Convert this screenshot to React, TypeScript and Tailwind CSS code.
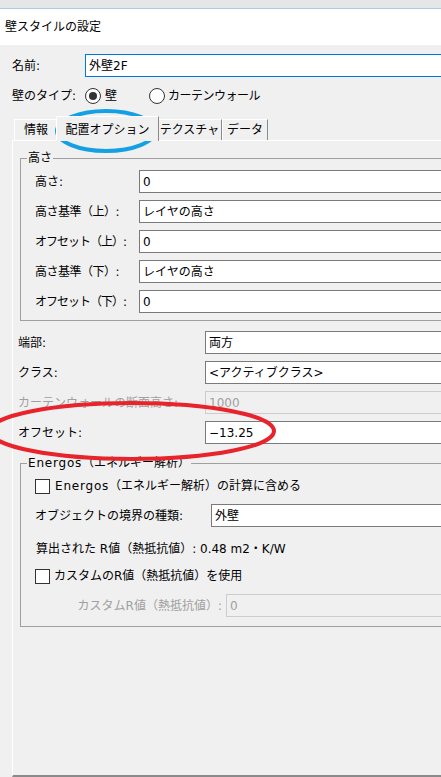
import React from "react";

function Field({ value, disabled = false }: { value: string; disabled?: boolean }) {
  return (
    <div
      className={
        disabled
          ? "flex-1 h-full flex items-center pl-[3px] border border-[#cccccc] bg-[#f0f0f0] text-[#a0a0a0]"
          : "flex-1 h-full flex items-center pl-[3px] border border-[#7a7a7a] bg-white"
      }
    >
      {value}
    </div>
  );
}

function Tab({ label, w, selected = false }: { label: string; w: string; selected?: boolean }) {
  if (selected) {
    return (
      <div
        className={`relative z-10 -ml-[2px] -mr-[2px] -mb-px h-[25px] pt-[2px] flex items-center justify-center bg-[#f0f0f0] border-t border-l border-white border-r border-r-[#8a8a8a] ${w}`}
      >
        {label}
      </div>
    );
  }
  return (
    <div
      className={`h-[21px] flex items-center justify-center border-t border-l border-white border-r border-r-[#8a8a8a] ${w}`}
    >
      {label}
    </div>
  );
}

function CheckBox() {
  return <span className="block w-[15px] h-[15px] border border-[#333333] bg-white shrink-0" />;
}

export default function App() {
  const heightRows: [string, string, string][] = [
    ["高さ:", "0", ""],
    ["高さ基準（上）:", "レイヤの高さ", "tracking-[-0.5px]"],
    ["オフセット（上）:", "0", "tracking-[-1px]"],
    ["高さ基準（下）:", "レイヤの高さ", "tracking-[-0.5px]"],
    ["オフセット（下）:", "0", "tracking-[-1px]"],
  ];
  return (
    <div className="relative w-[441px] h-[777px] overflow-hidden bg-[#f0f0f0] text-[12px] leading-[16px] text-black font-['DejaVu_Sans','Noto_Sans_CJK_JP',sans-serif]">
      <div className="w-[480px]">
        <div className="h-[9px] bg-[#e6e6e6] border-b border-[#a9cdea]" />
        <div className="h-[36px] bg-white flex items-center pl-[5px]">壁スタイルの設定</div>

        <div className="mt-[9px] h-[23px] flex items-center pl-[12px]">
          <span className="w-[73px]">名前:</span>
          <div className="flex-1 h-full flex items-center pl-[3px] border border-[#0078d7] bg-white">外壁2F</div>
        </div>

        <div className="mt-[8px] h-[21px] flex items-center pl-[12px]">
          <span className="w-[73px]">壁のタイプ:</span>
          <span className="w-[16px] h-[16px] rounded-full border border-[#333333] bg-white flex items-center justify-center">
            <span className="w-[8px] h-[8px] rounded-full bg-[#333333]" />
          </span>
          <span className="ml-[4px]">壁</span>
          <span className="ml-[32px] w-[16px] h-[16px] rounded-full border border-[#333333] bg-white" />
          <span className="ml-[3px] tracking-[-0.5px]">カーテンウォール</span>
        </div>

        <div className="mt-[10px] h-[24px] flex items-end pl-[14px]">
          <Tab label="情報" w="w-[44px]" />
          <Tab label="配置オプション" w="w-[103px]" selected />
          <Tab label="テクスチャ" w="w-[65px]" />
          <Tab label="データ" w="w-[46px]" />
        </div>

        <div className="ml-[12px] h-[637px] border-t border-l border-white border-b-2 border-b-[#8a8a8a] flex flex-col">
          <fieldset className="ml-[7px] mt-[9px] border border-[#a0a0a0] p-0 m-0 min-w-0">
            <legend className="ml-[6px] px-[1px] leading-[16px]">高さ</legend>
            <div className="pl-[14px] pt-[4px] pb-[7px] flex flex-col gap-[7px]">
              {heightRows.map(([l, v, t]) => (
                <div key={l} className="h-[23px] flex items-center">
                  <span className={`w-[104px] whitespace-nowrap ${t}`}>{l}</span>
                  <Field value={v} />
                </div>
              ))}
            </div>
          </fieldset>

          <div className="mt-[10px] pl-[5px] flex flex-col gap-[7px]">
            <div className="h-[23px] flex items-center">
              <span className="w-[187px]">端部:</span>
              <Field value="両方" />
            </div>
            <div className="h-[23px] flex items-center">
              <span className="w-[187px]">クラス:</span>
              <Field value="<アクティブクラス>" />
            </div>
            <div className="h-[23px] flex items-center">
              <span className="w-[187px] text-[#a0a0a0] whitespace-nowrap">カーテンウォールの断面高さ:</span>
              <Field value="1000" disabled />
            </div>
            <div className="h-[23px] flex items-center">
              <span className="w-[187px]">オフセット:</span>
              <Field value="−13.25" />
            </div>
          </div>

          <fieldset className="ml-[7px] mt-[11px] border border-[#a0a0a0] p-0 m-0 min-w-0">
            <legend className="ml-[6px] px-[1px] leading-[16px]">
              <span className="tracking-[0.8px]">Energos</span>（エネルギー解析）
            </legend>
            <div className="pl-[14px] pt-[4px] pb-[9px] flex flex-col">
              <div className="h-[22px] flex items-center">
                <CheckBox />
                <span className="ml-[5px]">
                  <span className="tracking-[0.8px]">Energos</span>（エネルギー解析）の計算に含める
                </span>
              </div>
              <div className="mt-[7px] h-[23px] flex items-center">
                <span className="w-[176px]">オブジェクトの境界の種類:</span>
                <Field value="外壁" />
              </div>
              <div className="mt-[11px] h-[22px] flex items-center pl-[1px] whitespace-nowrap">
                算出された R値（熱抵抗値）: 0.48 m2・K/W
              </div>
              <div className="mt-[5px] h-[22px] flex items-center">
                <CheckBox />
                <span className="ml-[4px]">カスタムのR値（熱抵抗値）を使用</span>
              </div>
              <div className="mt-[7px] h-[23px] flex items-center">
                <span className="w-[191px] text-right pr-[4px] text-[#a0a0a0] whitespace-nowrap">カスタムR値（熱抵抗値）:</span>
                <Field value="0" disabled />
              </div>
            </div>
          </fieldset>
        </div>
      </div>

      <svg className="absolute left-0 top-0 pointer-events-none" width="441" height="777" viewBox="0 0 441 777">
        <ellipse cx="106" cy="131" rx="49" ry="20" fill="none" stroke="#14a0e2" strokeWidth="4" />
        <ellipse cx="132" cy="431" rx="142" ry="28" fill="none" stroke="#e8232b" strokeWidth="4" />
      </svg>
    </div>
  );
}
